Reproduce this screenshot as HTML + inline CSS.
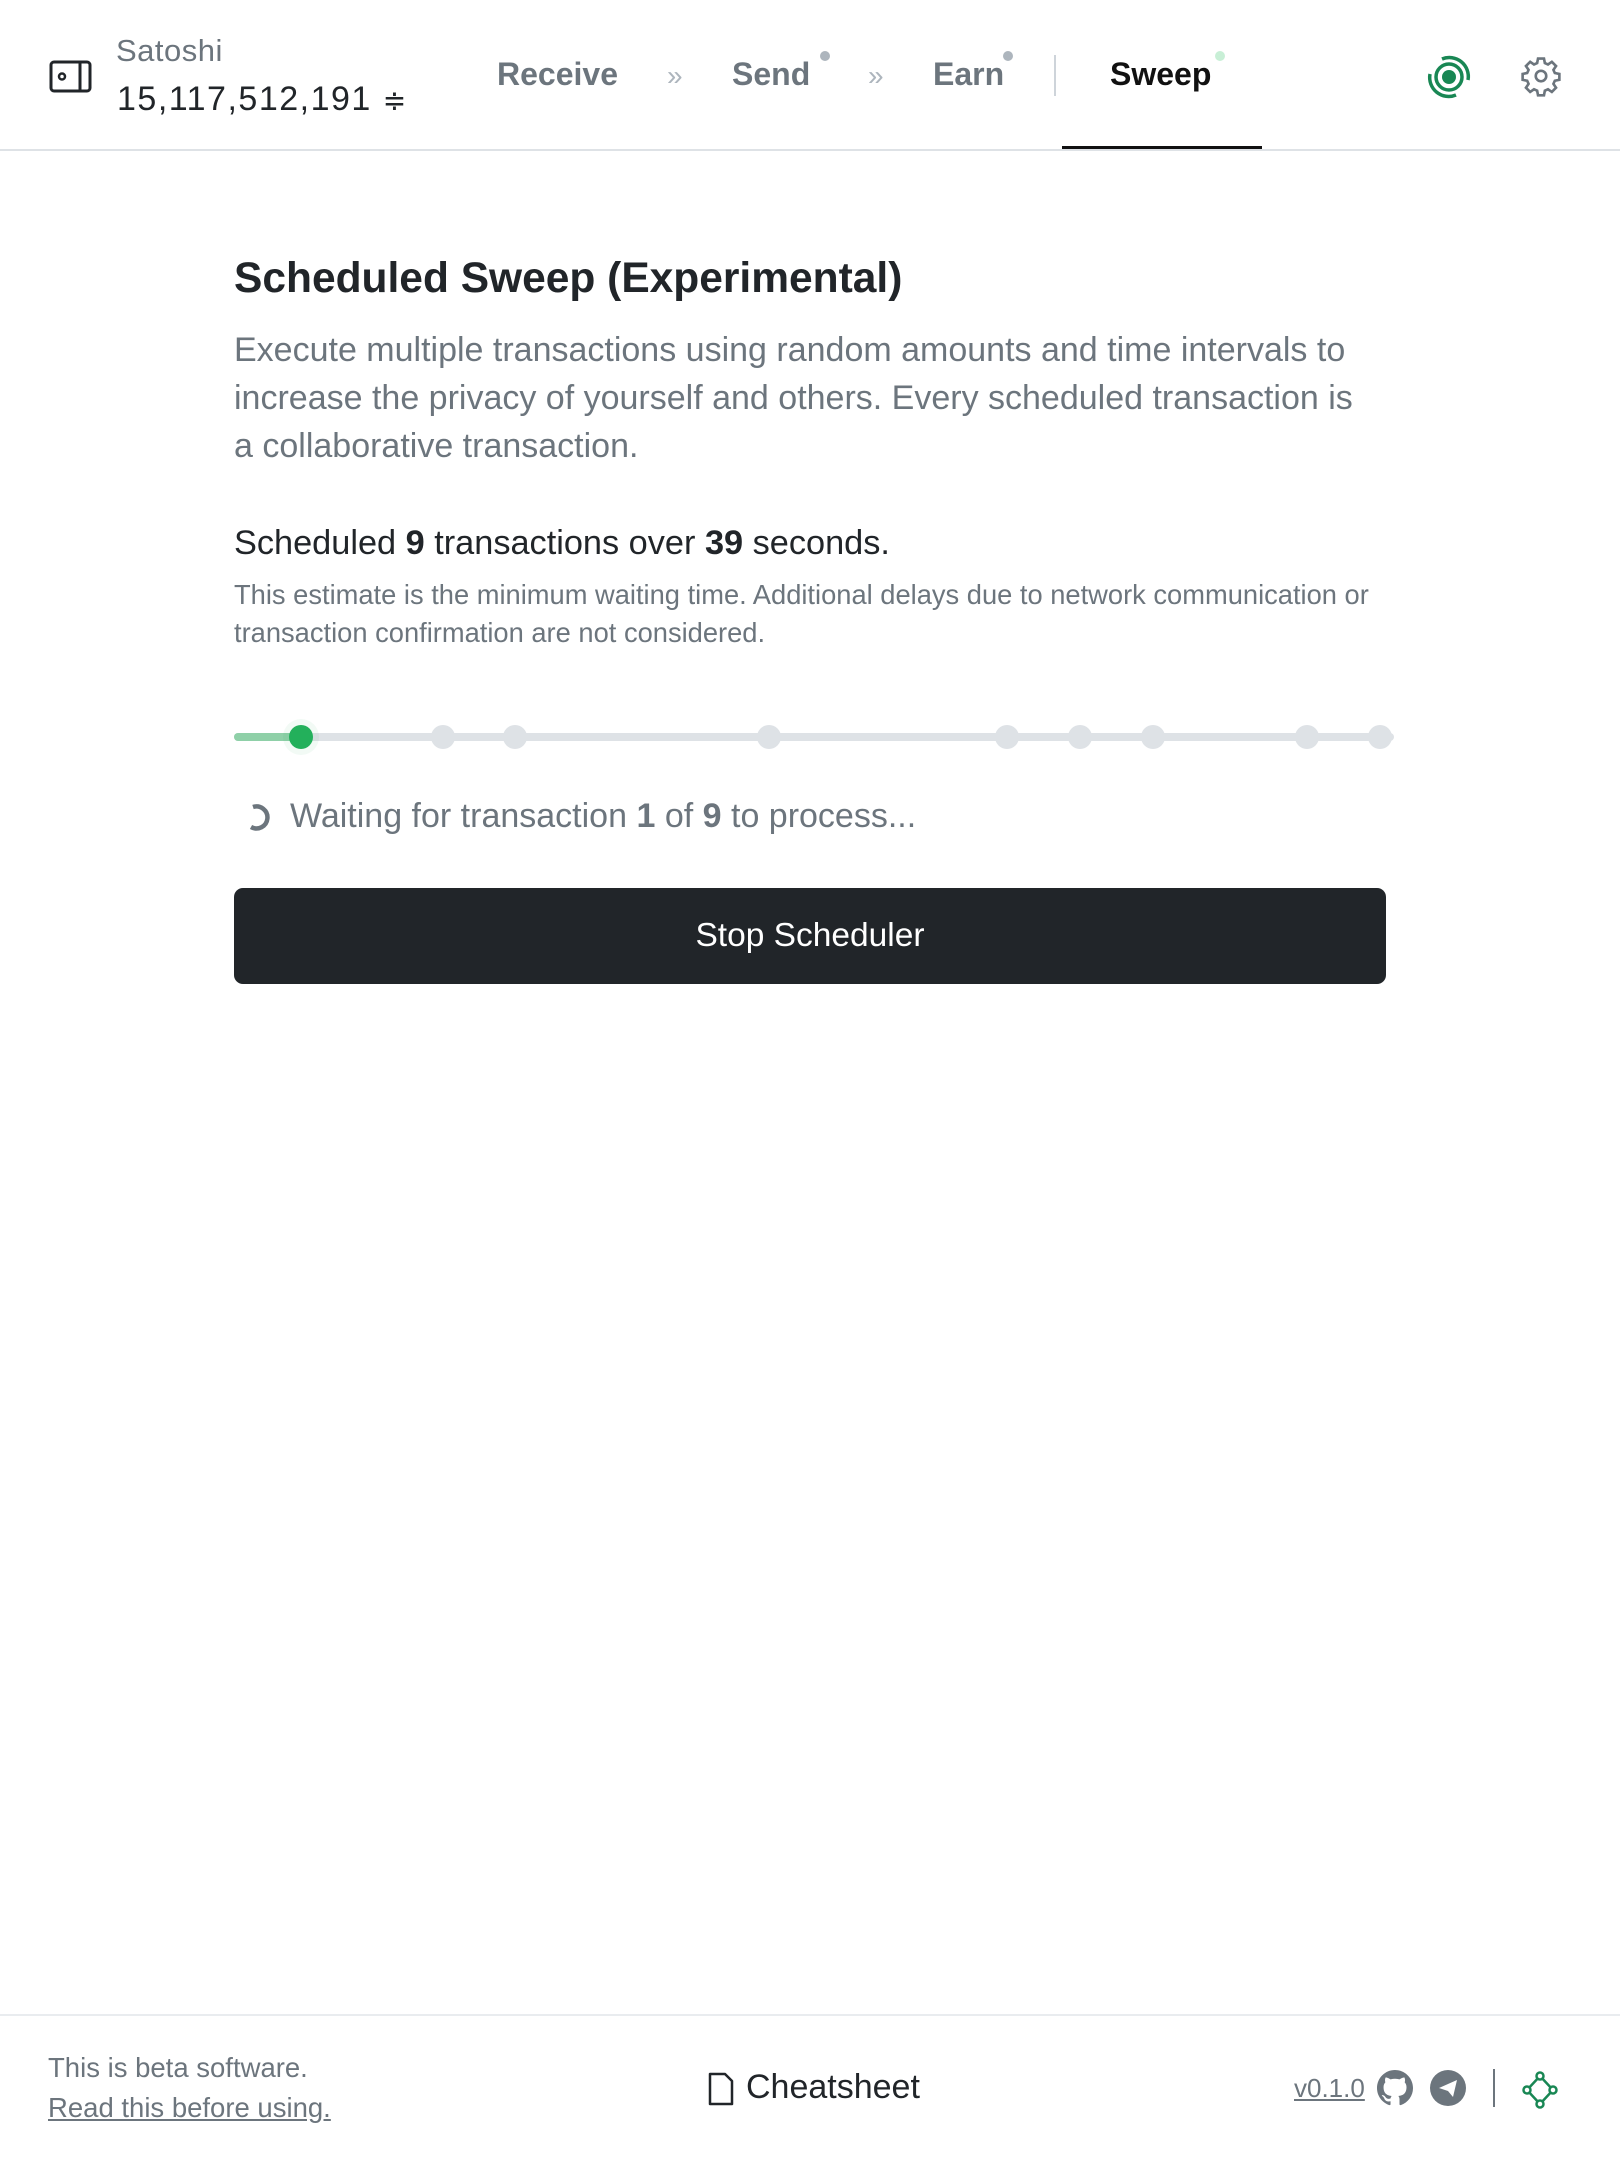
<!DOCTYPE html>
<html><head><meta charset="utf-8">
<style>
*{margin:0;padding:0;box-sizing:border-box}
body{width:1620px;height:2160px;background:#fff;font-family:"Liberation Sans",sans-serif;position:relative;overflow:hidden;color:#212529}
.a{position:absolute;white-space:nowrap}
.nav{font-size:32px;font-weight:700;color:#6c757d;top:56px}
.dot{position:absolute;width:10px;height:10px;border-radius:50%;background:#adb5bd}
.pd{position:absolute;top:725px;width:24px;height:24px;border-radius:50%;background:#dee2e6}
</style></head><body>
<!-- header -->
<svg class="a" style="left:49px;top:60px" width="43" height="33" viewBox="0 0 43 33"><rect x="2" y="2" width="39" height="29" rx="3" fill="none" stroke="#212529" stroke-width="3"/><line x1="31" y1="2" x2="31" y2="31" stroke="#212529" stroke-width="3"/><circle cx="13" cy="16.5" r="3" fill="none" stroke="#212529" stroke-width="2.5"/></svg>
<div class="a" style="left:116px;top:33px;font-size:31px;color:#6c757d;letter-spacing:0.5px">Satoshi</div>
<div class="a" style="left:117px;top:80px;font-size:34px;color:#212529;letter-spacing:1.5px">15,117,512,191 <span style="font-size:28px">≑</span></div>
<div class="a nav" style="left:497px">Receive</div>
<div class="a" style="left:667px;top:60px;font-size:28px;color:#adb5bd">»</div>
<div class="a nav" style="left:732px">Send</div>
<div class="dot" style="left:820px;top:51px"></div>
<div class="a" style="left:868px;top:60px;font-size:28px;color:#adb5bd">»</div>
<div class="a nav" style="left:933px">Earn</div>
<div class="dot" style="left:1003px;top:51px"></div>
<div class="a" style="left:1054px;top:55px;width:2px;height:41px;background:#ced4da"></div>
<div class="a nav" style="left:1110px;color:#111">Sweep</div>
<div class="dot" style="left:1215px;top:51px;background:#c8efd6"></div>
<div class="a" style="left:1062px;top:146px;width:200px;height:4px;background:#111"></div>
<div class="a" style="left:0;top:149px;width:1620px;height:2px;background:#dee2e6"></div>
<svg class="a" style="left:1426px;top:54px" width="46" height="46" viewBox="0 0 46 46"><circle cx="23" cy="23" r="7" fill="#198754"/><circle cx="23" cy="23" r="13" fill="none" stroke="#198754" stroke-width="3.5"/><path d="M4 20 A19 19 0 0 0 30 41" fill="none" stroke="#198754" stroke-width="3.5"/><path d="M16 5 A19 19 0 0 1 42 26" fill="none" stroke="#198754" stroke-width="3.5"/></svg>
<svg class="a" style="left:1520px;top:55px" width="42" height="42" viewBox="0 0 24 24" fill="none" stroke="#6c757d" stroke-width="1.5"><circle cx="12" cy="12" r="3"/><path d="M10.3 2h3.4l.5 2.6 1.8.8 2.2-1.5 2.4 2.4-1.5 2.2.8 1.8 2.6.5v3.4l-2.6.5-.8 1.8 1.5 2.2-2.4 2.4-2.2-1.5-1.8.8-.5 2.6h-3.4l-.5-2.6-1.8-.8-2.2 1.5-2.4-2.4 1.5-2.2-.8-1.8-2.6-.5v-3.4l2.6-.5.8-1.8-1.5-2.2 2.4-2.4 2.2 1.5 1.8-.8z"/></svg>
<!-- content -->
<div class="a" style="left:234px;top:255px;font-size:42.5px;font-weight:700;color:#212529">Scheduled Sweep (Experimental)</div>
<div class="a" style="left:234px;top:326px;font-size:34px;line-height:48px;color:#6c757d;white-space:normal;width:1370px">Execute multiple transactions using random amounts and time intervals to<br>increase the privacy of yourself and others. Every scheduled transaction is<br>a collaborative transaction.</div>
<div class="a" style="left:234px;top:524px;font-size:34.3px;color:#212529">Scheduled <b>9</b> transactions over <b>39</b> seconds.</div>
<div class="a" style="left:234px;top:576px;font-size:27.3px;line-height:38px;color:#6c757d;white-space:normal;width:1180px">This estimate is the minimum waiting time. Additional delays due to network communication or transaction confirmation are not considered.</div>
<div class="a" style="left:234px;top:733px;width:1160px;height:8px;border-radius:4px;background:#dee2e6"></div>
<div class="a" style="left:234px;top:733px;width:68px;height:8px;border-radius:4px;background:#8fd0a8"></div>
<div class="pd" style="left:431px"></div><div class="pd" style="left:503px"></div><div class="pd" style="left:757px"></div><div class="pd" style="left:995px"></div><div class="pd" style="left:1068px"></div><div class="pd" style="left:1141px"></div><div class="pd" style="left:1295px"></div><div class="pd" style="left:1368px"></div>
<div class="pd" style="left:289px;background:#23b05b;box-shadow:0 0 0 6px rgba(35,176,91,0.06)"></div>
<svg class="a" style="left:244px;top:801px" width="30" height="32" viewBox="0 0 30 32"><path d="M9 6 A11 11 0 1 1 7 26" fill="none" stroke="#6c757d" stroke-width="4.5"/></svg>
<div class="a" style="left:290px;top:797px;font-size:34px;color:#6c757d">Waiting for transaction <b>1</b> of <b>9</b> to process...</div>
<div class="a" style="left:234px;top:888px;width:1152px;height:96px;border-radius:9px;background:#212529;color:#fff;font-size:33.5px;line-height:96px;text-align:center">Stop Scheduler</div>
<!-- footer -->
<div class="a" style="left:0;top:2014px;width:1620px;height:2px;background:#e9ecef"></div>
<div class="a" style="left:48px;top:2052px;font-size:27.5px;color:#6c757d">This is beta software.</div>
<div class="a" style="left:48px;top:2092px;font-size:27.5px;color:#6c757d;text-decoration:underline">Read this before using.</div>
<svg class="a" style="left:708px;top:2072px" width="26" height="34" viewBox="0 0 26 34"><path d="M2 2h15l7 7v23H2z" fill="none" stroke="#212529" stroke-width="2.5" stroke-linejoin="round"/></svg>
<div class="a" style="left:746px;top:2068px;font-size:34px;color:#212529">Cheatsheet</div>
<div class="a" style="left:1294px;top:2073px;font-size:26px;color:#6c757d;text-decoration:underline">v0.1.0</div>
<svg class="a" style="left:1377px;top:2070px" width="36" height="36" viewBox="0 0 16 16"><path fill="#6c757d" d="M8 0C3.58 0 0 3.58 0 8c0 3.54 2.29 6.53 5.47 7.59.4.07.55-.17.55-.38v-1.33c-2.23.48-2.7-1.07-2.7-1.07-.36-.92-.89-1.17-.89-1.17-.73-.5.06-.49.06-.49.8.06 1.23.82 1.23.82.71 1.22 1.87.87 2.33.66.07-.52.28-.87.5-1.07-1.78-.2-3.64-.89-3.64-3.95 0-.87.31-1.59.82-2.15-.08-.2-.36-1.02.08-2.12 0 0 .67-.21 2.2.82a7.6 7.6 0 0 1 4 0c1.53-1.04 2.2-.82 2.2-.82.44 1.1.16 1.92.08 2.12.51.56.82 1.27.82 2.15 0 3.07-1.87 3.75-3.65 3.95.29.25.54.73.54 1.48v2.2c0 .21.15.46.55.38A8 8 0 0 0 16 8c0-4.42-3.58-8-8-8"/></svg>
<svg class="a" style="left:1430px;top:2070px" width="36" height="36" viewBox="0 0 36 36"><circle cx="18" cy="18" r="18" fill="#6c757d"/><path d="M9 18 L27 10 L23 27 L18 21 Z" fill="#fff"/></svg>
<div class="a" style="left:1493px;top:2069px;width:2px;height:38px;background:#6c757d"></div>
<svg class="a" style="left:1520px;top:2070px" width="40" height="40" viewBox="0 0 40 40" fill="none" stroke="#198754" stroke-width="2.5"><path d="M20 6 L33 20 L20 34 L7 20 Z"/><circle cx="20" cy="6" r="3.5" fill="#fff"/><circle cx="33" cy="20" r="3.5" fill="#fff"/><circle cx="20" cy="34" r="3.5" fill="#fff"/><circle cx="7" cy="20" r="3.5" fill="#fff"/></svg>
</body></html>
